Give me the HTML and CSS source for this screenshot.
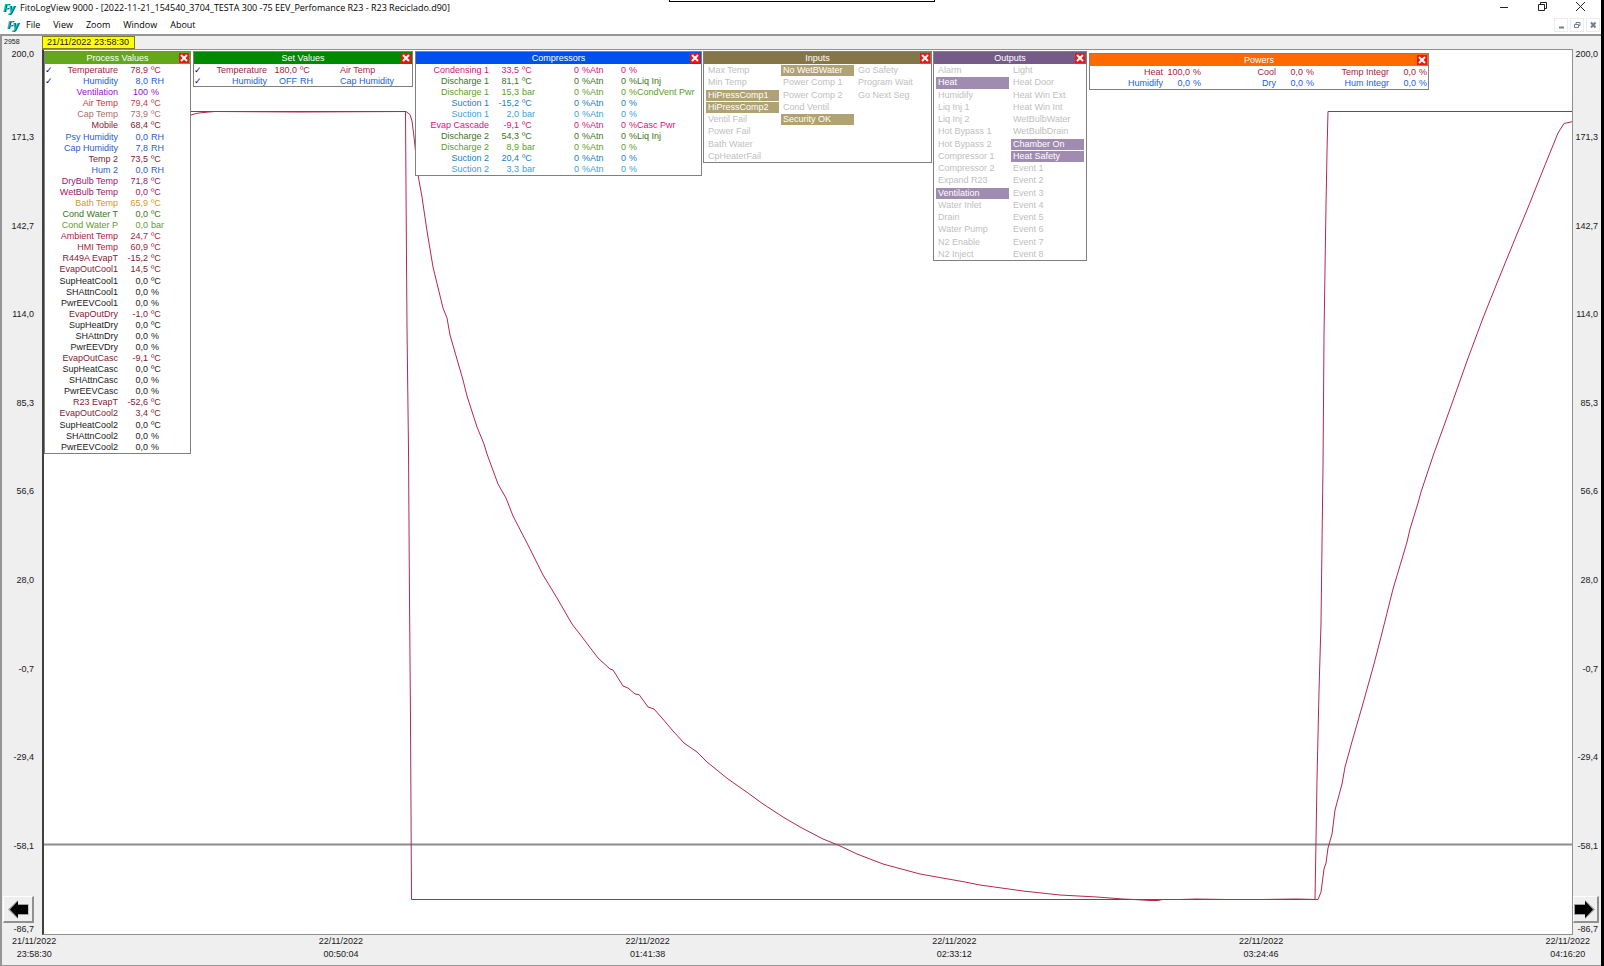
FILE: index.html
```html
<!DOCTYPE html>
<html lang="en">
  <head>
    <meta charset="UTF-8" />
    <meta name="viewport" content="width=device-width, initial-scale=1.0" />
    <title>FitoLogView 9000</title>
    <link rel="stylesheet" href="styles.css">
  </head>
  <body>
    <div class="notch"></div>
    <header class="titlebar">
      <span class="logo">Fy</span>
      <h1>FitoLogView 9000 - [2022-11-21_154540_3704_TESTA 300 -75 EEV_Perfomance R23 - R23 Reciclado.d90]</h1>
      <div class="window-buttons">
        <button aria-label="Minimize"><svg width="11" height="11" viewBox="0 0 11 11"><path d="M1 6.5H9" /></svg></button>
        <button aria-label="Restore"><svg width="11" height="11" viewBox="0 0 11 11"><path d="M1.500 3.500H7.500V9.500H1.500ZM3.500 3V1.500H9.500V7.500H8" /></svg></button>
        <button aria-label="Close"><svg width="11" height="11" viewBox="0 0 11 11"><path d="M1 1L10 10M10 1L1 10" /></svg></button>
      </div>
    </header>
    <nav class="menubar">
      <span class="logo">Fy</span>
      <button>File</button>
      <button>View</button>
      <button>Zoom</button>
      <button>Window</button>
      <button>About</button>
      <div class="mdi-buttons">
        <button aria-label="Minimize document"><svg width="8" height="8" viewBox="0 0 8 8"><path d="M2 6.500H7" /></svg></button>
        <button aria-label="Restore document"><svg width="8" height="8" viewBox="0 0 8 8"><path class="thin" d="M1.500 3.500H5.500V6.500H1.500ZM3 3V1.500H7V4.500H6" /></svg></button>
        <button aria-label="Close document"><svg width="8" height="8" viewBox="0 0 8 8"><path d="M2 1.500L6.500 6.500M6.500 1.500L2 6.500" /></svg></button>
      </div>
    </nav>

    <main class="workspace">
      <div class="sample-count">2958</div>
      <div class="cursor-row"><span class="cursor-time">21/11/2022 23:58:30</span></div>

      <div class="axis axis-left">
        <ol class="ticks">
          <li>200,0</li><li>171,3</li><li>142,7</li><li>114,0</li><li>85,3</li><li>56,6</li><li>28,0</li><li>-0,7</li><li>-29,4</li><li>-58,1</li><li>-86,7</li>
        </ol>
        <button class="scroll" aria-label="Scroll back"><svg width="21" height="19" viewBox="0 0 21 19"><path class="halo" d="M0 9.500L10 0V4H20.500V15H10V19Z" /><path d="M2 9.500L10 1V5H20V14H10V18Z" /></svg></button>
      </div>

      <div class="plot">
        <svg class="chart" viewBox="44 50 1528 884" preserveAspectRatio="none">
          <path class="level" d="M43 844.500H1573" />
          <polyline class="setpoint" points="43,111.5 405.500,111.5 406,190 407,328 408.500,450 409.500,600 410.500,720 411.500,899.500 1315,899.500 1317,780 1319,691 1321,623 1322,544 1323,466 1324,335 1326,205 1327,152 1328,111.5 1573,111.5" />
          <polyline class="measured" points="191,115 196,113.5 203,112.5 215,111.5 300,112 406,111.5 410,114.5 412,121 414,137 418,175 422,197 427,231 433,267 443,308 447,318 450,335 463,380 467,396 477,427 484,444 487,454 498,484 506,498 513,516 527,543 543,575 557,598 572,624 579,633 598,658 610,669 613,670 623,686 628,688 635,694 639,694.5 648,707 654,709 662,718 673,731 684,743 697,752 707,762 728,779 748,793 763,804 783,817 800,827 823,839 838,845 857,854 883,864 920,874 965,882 980,885 1023,891 1060,895 1097,897 1123,899 1134,899.5 1150,900.500 1158,900.500 1162,899.500 1180,899.500 1196,899 1225,899.500 1262,899.500 1295,899 1318,899.500 1321,892 1324,869 1326,863 1328,848 1332,834 1335,810 1342,784 1345,767 1353,738 1362,707 1374,664 1382,633 1393,589 1407,542 1410,529 1418,503 1421,492 1433,456 1450,409 1467,361 1483,318 1497,283 1517,234 1527,210 1543,170 1558,133 1564,123.5 1573,121.5" />
        </svg>

        <section class="panel process">
          <h2>Process Values<button class="close" aria-label="Close Process Values"><svg width="10" height="10" viewBox="0 0 10 10"><path d="M2 2L8 8M8 2L2 8" /></svg></button></h2>
          <table>
            <tr class="crimson"><td class="mark">✓</td><th>Temperature</th><td class="value">78,9</td><td>ºC</td></tr>
            <tr class="blue"><td class="mark">✓</td><th>Humidity</th><td class="value">8,0</td><td>RH</td></tr>
            <tr class="violet"><td></td><th>Ventilation</th><td class="value">100</td><td>%</td></tr>
            <tr class="red"><td></td><th>Air Temp</th><td class="value">79,4</td><td>ºC</td></tr>
            <tr class="dusty"><td></td><th>Cap Temp</th><td class="value">73,9</td><td>ºC</td></tr>
            <tr class="maroon"><td></td><th>Mobile</th><td class="value">68,4</td><td>ºC</td></tr>
            <tr class="royal"><td></td><th>Psy Humidity</th><td class="value">0,0</td><td>RH</td></tr>
            <tr class="royal"><td></td><th>Cap Humidity</th><td class="value">7,8</td><td>RH</td></tr>
            <tr class="maroon"><td></td><th>Temp 2</th><td class="value">73,5</td><td>ºC</td></tr>
            <tr class="royal"><td></td><th>Hum 2</th><td class="value">0,0</td><td>RH</td></tr>
            <tr class="plum"><td></td><th>DryBulb Temp</th><td class="value">71,8</td><td>ºC</td></tr>
            <tr class="plum"><td></td><th>WetBulb Temp</th><td class="value">0,0</td><td>ºC</td></tr>
            <tr class="amber"><td></td><th>Bath Temp</th><td class="value">65,9</td><td>ºC</td></tr>
            <tr class="green"><td></td><th>Cond Water T</th><td class="value">0,0</td><td>ºC</td></tr>
            <tr class="lime"><td></td><th>Cond Water P</th><td class="value">0,0</td><td>bar</td></tr>
            <tr class="crimson"><td></td><th>Ambient Temp</th><td class="value">24,7</td><td>ºC</td></tr>
            <tr class="crimson"><td></td><th>HMI Temp</th><td class="value">60,9</td><td>ºC</td></tr>
            <tr class="maroon"><td></td><th>R449A EvapT</th><td class="value">-15,2</td><td>ºC</td></tr>
            <tr class="maroon"><td></td><th>EvapOutCool1</th><td class="value">14,5</td><td>ºC</td></tr>
            <tr><td></td><th>SupHeatCool1</th><td class="value">0,0</td><td>ºC</td></tr>
            <tr><td></td><th>SHAttnCool1</th><td class="value">0,0</td><td>%</td></tr>
            <tr><td></td><th>PwrEEVCool1</th><td class="value">0,0</td><td>%</td></tr>
            <tr class="maroon"><td></td><th>EvapOutDry</th><td class="value">-1,0</td><td>ºC</td></tr>
            <tr><td></td><th>SupHeatDry</th><td class="value">0,0</td><td>ºC</td></tr>
            <tr><td></td><th>SHAttnDry</th><td class="value">0,0</td><td>%</td></tr>
            <tr><td></td><th>PwrEEVDry</th><td class="value">0,0</td><td>%</td></tr>
            <tr class="maroon"><td></td><th>EvapOutCasc</th><td class="value">-9,1</td><td>ºC</td></tr>
            <tr><td></td><th>SupHeatCasc</th><td class="value">0,0</td><td>ºC</td></tr>
            <tr><td></td><th>SHAttnCasc</th><td class="value">0,0</td><td>%</td></tr>
            <tr><td></td><th>PwrEEVCasc</th><td class="value">0,0</td><td>%</td></tr>
            <tr class="maroon"><td></td><th>R23 EvapT</th><td class="value">-52,6</td><td>ºC</td></tr>
            <tr class="maroon"><td></td><th>EvapOutCool2</th><td class="value">3,4</td><td>ºC</td></tr>
            <tr><td></td><th>SupHeatCool2</th><td class="value">0,0</td><td>ºC</td></tr>
            <tr><td></td><th>SHAttnCool2</th><td class="value">0,0</td><td>%</td></tr>
            <tr><td></td><th>PwrEEVCool2</th><td class="value">0,0</td><td>%</td></tr>
          </table>
        </section>

        <section class="panel setvalues">
          <h2>Set Values<button class="close" aria-label="Close Set Values"><svg width="10" height="10" viewBox="0 0 10 10"><path d="M2 2L8 8M8 2L2 8" /></svg></button></h2>
          <table>
            <tr class="crimson"><td class="mark">✓</td><th>Temperature</th><td class="value">180,0</td><td class="unit">ºC</td><td>Air Temp</td></tr>
            <tr class="blue"><td class="mark">✓</td><th>Humidity</th><td class="value">OFF</td><td class="unit">RH</td><td>Cap Humidity</td></tr>
          </table>
        </section>

        <section class="panel compressors">
          <h2>Compressors<button class="close" aria-label="Close Compressors"><svg width="10" height="10" viewBox="0 0 10 10"><path d="M2 2L8 8M8 2L2 8" /></svg></button></h2>
          <table>
            <tr class="pink"><th>Condensing 1</th><td class="value">33,5</td><td class="unit">ºC</td><td class="attn">0</td><td class="unit">%Atn</td><td class="power">0</td><td>%</td></tr>
            <tr class="green"><th>Discharge 1</th><td class="value">81,1</td><td class="unit">ºC</td><td class="attn">0</td><td class="unit">%Atn</td><td class="power">0</td><td>%Liq Inj</td></tr>
            <tr class="lime"><th>Discharge 1</th><td class="value">15,3</td><td class="unit">bar</td><td class="attn">0</td><td class="unit">%Atn</td><td class="power">0</td><td>%CondVent Pwr</td></tr>
            <tr class="steel"><th>Suction 1</th><td class="value">-15,2</td><td class="unit">ºC</td><td class="attn">0</td><td class="unit">%Atn</td><td class="power">0</td><td>%</td></tr>
            <tr class="sky"><th>Suction 1</th><td class="value">2,0</td><td class="unit">bar</td><td class="attn">0</td><td class="unit">%Atn</td><td class="power">0</td><td>%</td></tr>
            <tr class="pink"><th>Evap Cascade</th><td class="value">-9,1</td><td class="unit">ºC</td><td class="attn">0</td><td class="unit">%Atn</td><td class="power">0</td><td>%Casc Pwr</td></tr>
            <tr class="green"><th>Discharge 2</th><td class="value">54,3</td><td class="unit">ºC</td><td class="attn">0</td><td class="unit">%Atn</td><td class="power">0</td><td>%Liq Inj</td></tr>
            <tr class="lime"><th>Discharge 2</th><td class="value">8,9</td><td class="unit">bar</td><td class="attn">0</td><td class="unit">%Atn</td><td class="power">0</td><td>%</td></tr>
            <tr class="steel"><th>Suction 2</th><td class="value">20,4</td><td class="unit">ºC</td><td class="attn">0</td><td class="unit">%Atn</td><td class="power">0</td><td>%</td></tr>
            <tr class="sky"><th>Suction 2</th><td class="value">3,3</td><td class="unit">bar</td><td class="attn">0</td><td class="unit">%Atn</td><td class="power">0</td><td>%</td></tr>
          </table>
        </section>

        <section class="panel inputs">
          <h2>Inputs<button class="close" aria-label="Close Inputs"><svg width="10" height="10" viewBox="0 0 10 10"><path d="M2 2L8 8M8 2L2 8" /></svg></button></h2>
          <div class="signals">
            <ul>
              <li>Max Temp</li><li>Min Temp</li><li class="on">HiPressComp1</li><li class="on">HiPressComp2</li><li>Ventil Fail</li><li>Power Fail</li><li>Bath Water</li><li>CpHeaterFail</li>
            </ul>
            <ul>
              <li class="on">No WetBWater</li><li>Power Comp 1</li><li>Power Comp 2</li><li>Cond Ventil</li><li class="on">Security OK</li>
            </ul>
            <ul>
              <li>Go Safety</li><li>Program Wait</li><li>Go Next Seg</li>
            </ul>
          </div>
        </section>

        <section class="panel outputs">
          <h2>Outputs<button class="close" aria-label="Close Outputs"><svg width="10" height="10" viewBox="0 0 10 10"><path d="M2 2L8 8M8 2L2 8" /></svg></button></h2>
          <div class="signals">
            <ul>
              <li>Alarm</li><li class="on">Heat</li><li>Humidify</li><li>Liq Inj 1</li><li>Liq Inj 2</li><li>Hot Bypass 1</li><li>Hot Bypass 2</li><li>Compressor 1</li><li>Compressor 2</li><li>Expand R23</li><li class="on">Ventilation</li><li>Water Inlet</li><li>Drain</li><li>Water Pump</li><li>N2 Enable</li><li>N2 Inject</li>
            </ul>
            <ul>
              <li>Light</li><li>Heat Door</li><li>Heat Win Ext</li><li>Heat Win Int</li><li>WetBulbWater</li><li>WetBulbDrain</li><li class="on">Chamber On</li><li class="on">Heat Safety</li><li>Event 1</li><li>Event 2</li><li>Event 3</li><li>Event 4</li><li>Event 5</li><li>Event 6</li><li>Event 7</li><li>Event 8</li>
            </ul>
          </div>
        </section>

        <section class="panel powers">
          <h2>Powers<button class="close" aria-label="Close Powers"><svg width="10" height="10" viewBox="0 0 10 10"><path d="M2 2L8 8M8 2L2 8" /></svg></button></h2>
          <table>
            <tr class="crimson"><th>Heat</th><td class="value">100,0</td><td>%</td><th>Cool</th><td class="value">0,0</td><td>%</td><th>Temp Integr</th><td class="value">0,0</td><td>%</td></tr>
            <tr class="blue"><th>Humidify</th><td class="value">0,0</td><td>%</td><th>Dry</th><td class="value">0,0</td><td>%</td><th>Hum Integr</th><td class="value">0,0</td><td>%</td></tr>
          </table>
        </section>
      </div>

      <div class="axis axis-right">
        <ol class="ticks">
          <li>200,0</li><li>171,3</li><li>142,7</li><li>114,0</li><li>85,3</li><li>56,6</li><li>28,0</li><li>-0,7</li><li>-29,4</li><li>-58,1</li><li>-86,7</li>
        </ol>
        <button class="scroll" aria-label="Scroll forward"><svg width="21" height="19" viewBox="0 0 21 19"><path class="halo" d="M21 9.500L11 0V4H0V15H11V19Z" /><path d="M19 9.500L11 1V5H1V14H11V18Z" /></svg></button>
      </div>

      <ol class="time-axis">
        <li>21/11/2022<br>23:58:30</li>
        <li>22/11/2022<br>00:50:04</li>
        <li>22/11/2022<br>01:41:38</li>
        <li>22/11/2022<br>02:33:12</li>
        <li>22/11/2022<br>03:24:46</li>
        <li>22/11/2022<br>04:16:20</li>
      </ol>
    </main>
  </body>
</html>
```
FILE: styles.css
```css
* {
  box-sizing: border-box;
}
body {
  margin: 0;
  height: 100vh;
  display: flex;
  flex-direction: column;
  font: 9px/11px "Liberation Sans", Arial, sans-serif;
  color: #202020;
  background: #fff;
  border-right: 3px solid #000;
  overflow: hidden;
}
h1, h2, ol, ul {
  margin: 0;
  padding: 0;
  list-style: none;
  font-weight: normal;
}
button {
  padding: 0;
  border: none;
  background: none;
  font: inherit;
  color: inherit;
}
svg {
  display: block;
}
.notch {
  position: absolute;
  top: 0;
  left: 0;
  right: 0;
  width: 266px;
  height: 2px;
  margin: 0 auto;
  border: 1px solid #000;
  border-top: none;
}

/* title and menu */
.titlebar,
.menubar {
  display: flex;
  align-items: center;
  font: 9px/14px "Open Sans", "Noto Sans", sans-serif;
  color: #000;
}
.titlebar {
  height: 16px;
  padding: 0 15px 0 3px;
  gap: 5px;
}
.titlebar h1 {
  font-size: 9px;
}
.menubar {
  height: 18px;
  padding: 0 1px 0 7px;
  gap: 13px;
}
.logo {
  width: 12px;
  font: italic bold 11px/14px "Open Sans", sans-serif;
  color: #00b8c0;
  text-shadow: 1px 0 #045058;
}
.menubar .logo {
  margin-right: -6px;
}
.window-buttons {
  display: flex;
  align-self: flex-start;
  gap: 27px;
  margin-left: auto;
  padding-top: 1px;
}
.window-buttons svg,
.mdi-buttons svg {
  fill: none;
  stroke: #202020;
}
.mdi-buttons {
  display: flex;
  gap: 2px;
  margin-left: auto;
}
.mdi-buttons button {
  display: grid;
  place-items: center;
  width: 14px;
  height: 14px;
  border: 1px solid #ececec;
}
.mdi-buttons svg {
  stroke: #708090;
  stroke-width: 2;
}
.mdi-buttons .thin {
  stroke-width: 1;
}

/* plot with its scales */
.workspace {
  flex: 1;
  min-height: 0;
  display: grid;
  grid-template: 13px 1fr 30px / 40px 1fr 28px;
  background: #efefef;
  border: solid #969696;
  border-width: 2px 0 1px 2px;
}
.sample-count {
  padding-left: 2px;
  font-size: 7px;
  line-height: 11px;
}
.cursor-row {
  grid-column: 2 / 4;
}
.cursor-time {
  display: inline-block;
  height: 13px;
  padding: 0 5px 0 4px;
  background: #ff0;
  border: 1px solid #808000;
}
.axis {
  position: relative;
}
.ticks {
  height: 100%;
  display: flex;
  flex-direction: column;
  justify-content: space-between;
}
.ticks li {
  height: 0;
  display: flex;
  justify-content: flex-end;
  align-items: center;
}
.ticks li:first-child {
  align-items: flex-start;
}
.ticks li:last-child {
  align-items: flex-end;
}
.axis-left .ticks {
  padding-right: 8px;
}
.axis-right .ticks {
  padding-right: 3px;
}
.scroll {
  position: absolute;
  bottom: 12px;
  left: 1px;
  display: grid;
  place-items: center;
  width: 31px;
  height: 27px;
  background: #efefef;
  border: solid;
  border-width: 1px 2px 2px 1px;
  border-color: #fff #909090 #909090 #fff;
}
.axis-right .scroll {
  left: 0;
  width: 26px;
  justify-items: start;
}
.scroll .halo {
  fill: #a0a0a0;
}
.plot {
  position: relative;
  min-height: 0;
  background: #fff;
  border: 1px solid #909090;
  border-left: 2px solid #404040;
}
.chart {
  position: absolute;
  width: 100%;
  height: 100%;
}
.chart * {
  fill: none;
  stroke: #b4284c;
  stroke-width: 1;
  vector-effect: non-scaling-stroke;
}
.chart .level {
  stroke: #8c8c8c;
  stroke-width: 2;
}
.time-axis {
  grid-column: 1 / 4;
  display: flex;
  justify-content: space-between;
  padding: 0 11px 0 10px;
  line-height: 13px;
  text-align: center;
}

/* floating windows */
.panel {
  position: absolute;
  top: 1px;
  display: flex;
  flex-direction: column;
  background: #fff;
  border: 1px solid #808080;
}
.panel h2 {
  position: relative;
  height: 12px;
  font-size: 9px;
  line-height: 12px;
  text-align: center;
  color: #fff;
}
.close {
  position: absolute;
  top: 1px;
  right: 1px;
  width: 10px;
  height: 10px;
  background: #f01414;
}
.close path {
  stroke: #fff;
  stroke-width: 2;
}
.panel table {
  width: 100%;
  flex: 1;
  margin-top: 1px;
  border-collapse: collapse;
  table-layout: fixed;
}
.panel td,
.panel th {
  padding: 0;
  line-height: 11px;
  font-weight: normal;
  white-space: nowrap;
}
.panel th {
  width: 73px;
  text-align: right;
}
.panel .mark {
  width: 10px;
  font-family: "DejaVu Sans", sans-serif;
  font-weight: bold;
  color: #000080;
}
.panel .mark + th,
.process th {
  width: 63px;
}
.panel .value {
  width: 33px;
  padding-right: 3px;
  text-align: right;
}
.process {
  left: 0;
  width: 147px;
  height: 403px;
}
.process h2 {
  background: #62a81a;
}
.setvalues {
  left: 149px;
  width: 220px;
  height: 36px;
}
.setvalues h2 {
  background: #008a00;
}
.setvalues .unit {
  width: 40px;
}
.compressors {
  left: 371px;
  width: 287px;
  height: 125px;
}
.compressors h2 {
  background: #0050f0;
}
.compressors .unit {
  width: 36px;
}
.compressors .attn,
.compressors .power {
  padding-right: 3px;
  text-align: right;
}
.compressors .attn {
  width: 24px;
}
.compressors .power {
  width: 11px;
}
.inputs {
  left: 659px;
  width: 229px;
  height: 112px;
}
.inputs h2 {
  background: #857648;
}
.outputs {
  left: 889px;
  width: 154px;
  height: 210px;
}
.outputs h2 {
  background: #755c88;
}
.powers {
  top: 3px;
  left: 1045px;
  width: 340px;
  height: 37px;
}
.powers h2 {
  background: #ff6a00;
}
.powers .value {
  width: 30px;
}
.powers .value + td {
  width: 10px;
}
.signals {
  flex: 1;
  display: flex;
  gap: 2px;
  padding: 1px 2px 0;
  color: #c0c0c0;
}
.signals ul {
  flex: 1;
  display: grid;
  gap: 1px;
}
.inputs ul {
  grid-template-rows: repeat(8, 1fr);
}
.outputs ul {
  grid-template-rows: repeat(16, 1fr);
}
.signals li {
  padding-left: 2px;
  line-height: 11px;
}
.inputs .on {
  color: #fff;
  background: #b0a272;
}
.outputs .on {
  color: #fff;
  background: #a08cb0;
}

/* channel colours */
.crimson { color: #a81c40; }
.blue { color: #2060e8; }
.violet { color: #9010d0; }
.red { color: #c83c3c; }
.dusty { color: #b06c68; }
.maroon { color: #801c34; }
.royal { color: #2c5cd0; }
.plum { color: #a0146c; }
.amber { color: #d09a28; }
.green { color: #3c7420; }
.lime { color: #5ca028; }
.pink { color: #e0107c; }
.steel { color: #2080bc; }
.sky { color: #38a0e0; }
```
